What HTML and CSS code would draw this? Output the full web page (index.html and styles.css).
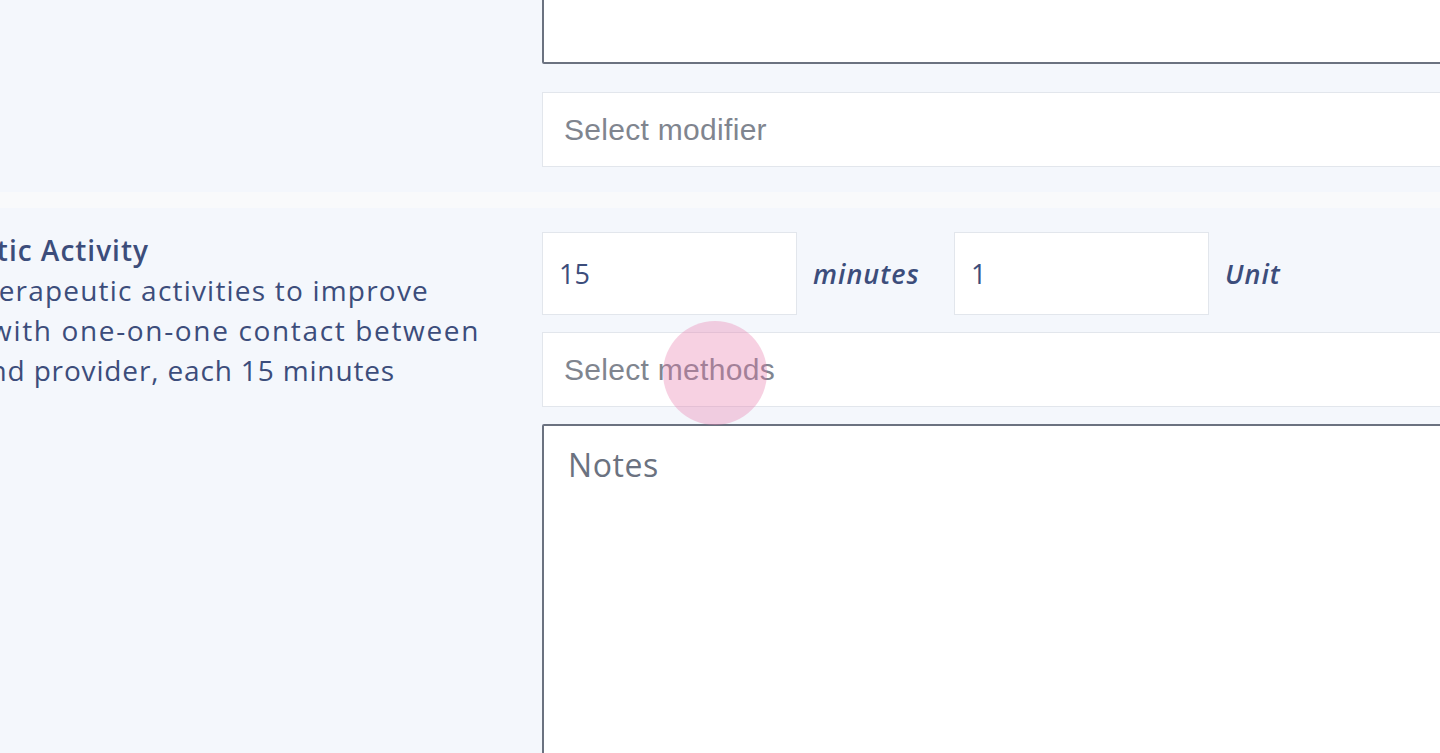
FILE: index.html
```html
<!DOCTYPE html>
<html lang="en">
<head>
<meta charset="utf-8">
<title>Service entry</title>
<link rel="stylesheet" href="styles.css">
</head>
<body>
<main class="page">
  <section class="row row-first">
    <div class="side"></div>
    <div class="fields">
      <div class="textarea textarea-top"></div>
      <div class="select"><span class="placeholder">Select modifier</span></div>
    </div>
  </section>

  <section class="row">
    <div class="side">
      <div class="desc">
        <div class="line title l1"><span>Therapeutic Activity</span></div>
        <div class="line l2"><span>Therapeutic activities to improve</span></div>
        <div class="line l3"><span>function with one-on-one contact between</span></div>
        <div class="line l4"><span>patient and provider, each 15 minutes</span></div>
      </div>
    </div>
    <div class="fields">
      <div class="qty">
        <div class="qty-group">
          <div class="input"><span class="value">15</span></div>
          <span class="unit">minutes</span>
        </div>
        <div class="qty-group">
          <div class="input"><span class="value">1</span></div>
          <span class="unit">Unit</span>
        </div>
      </div>
      <div class="select select-methods">
        <span class="placeholder">Select methods</span>
        <span class="touch"></span>
      </div>
      <div class="textarea textarea-notes"><span class="notes-ph">Notes</span></div>
    </div>
  </section>
</main>
</body>
</html>
```

FILE: styles.css
```css
* { box-sizing: border-box; }

html, body {
  margin: 0;
  padding: 0;
  height: 100%;
  overflow: hidden;
  background: #f9fafb;
}

body {
  font-family: "Open Sans", "Noto Sans", sans-serif;
  color: #3c4d7b;
}

.page {
  width: 1700px;
  margin-top: -100px;
}

.row {
  display: grid;
  grid-template-columns: 542px 1100px;
  background: #f4f7fc;
  margin-bottom: 16px;
  padding: 24px 0 26px;
}

.row-first {
  padding-top: 0;
  padding-bottom: 25px;
}

.side {
  overflow: hidden;
  min-width: 0;
}

.desc {
  margin-top: -2px;
  font-size: 28px;
  font-weight: 500;
  letter-spacing: 1.2px;
  line-height: 40px;
  white-space: nowrap;
}

.line {
  display: flex;
  justify-content: flex-end;
}

.title { font-weight: 600; letter-spacing: 1px; }
.l1 { width: 149px; }
.l2 { width: 429px; }
.l3 { width: 480px; letter-spacing: 1.65px; }
.l4 { width: 395px; letter-spacing: 0.85px; }

.fields {
  display: flex;
  flex-direction: column;
}

.textarea {
  background: #fff;
  border: 2px solid #6b7280;
  border-radius: 2px;
}

.textarea-top {
  height: 164px;
  margin-bottom: 28px;
}

.select {
  position: relative;
  height: 75px;
  background: #fff;
  border: 1.5px solid #e2e6ec;
  display: flex;
  align-items: center;
  padding-left: 21px;
}

.placeholder {
  font-family: "Liberation Sans", Arial, sans-serif;
  font-size: 30px;
  letter-spacing: 0.3px;
  color: #80858f;
}

.qty {
  display: flex;
  align-items: center;
  margin-bottom: 17px;
}

.qty-group {
  width: 412px;
  display: flex;
  align-items: center;
}

.input {
  width: 255px;
  height: 83px;
  background: #fff;
  border: 1.5px solid #e2e6ec;
  display: flex;
  align-items: center;
  padding-left: 16px;
}

.value {
  font-size: 27px;
  font-weight: 500;
  color: #3c4d7b;
}

.unit {
  margin-left: 16px;
  font-size: 27px;
  font-weight: 600;
  font-style: italic;
  letter-spacing: 1px;
  color: #3c4d7b;
}

.select-methods {
  margin-bottom: 17px;
}

.touch {
  position: absolute;
  left: 120px;
  top: -12px;
  width: 104px;
  height: 104px;
  border-radius: 50%;
  background: rgba(232, 120, 170, 0.34);
}

.textarea-notes {
  height: 400px;
  padding: 17px 24px;
}

.notes-ph {
  font-size: 32px;
  letter-spacing: 0.6px;
  color: #6b7280;
}
```
